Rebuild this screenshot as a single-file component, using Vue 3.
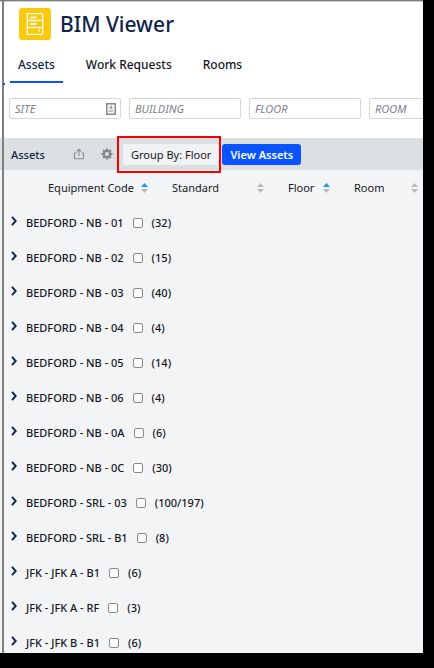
<script setup>
import { ref } from 'vue'

const tabs = ['Assets', 'Work Requests', 'Rooms']
const activeTab = ref('Assets')

const filters = [
  { name: 'SITE', picker: true },
  { name: 'BUILDING' },
  { name: 'FLOOR' },
  { name: 'ROOM' },
]

const columns = [
  { name: 'Equipment Code', key: 'code', sorted: true },
  { name: 'Standard', key: 'standard', sorted: false },
  { name: 'Floor', key: 'floor', sorted: true },
  { name: 'Room', key: 'room', sorted: false },
]

const groups = ref([
  { name: 'BEDFORD - NB - 01', count: '32' },
  { name: 'BEDFORD - NB - 02', count: '15' },
  { name: 'BEDFORD - NB - 03', count: '40' },
  { name: 'BEDFORD - NB - 04', count: '4' },
  { name: 'BEDFORD - NB - 05', count: '14' },
  { name: 'BEDFORD - NB - 06', count: '4' },
  { name: 'BEDFORD - NB - 0A', count: '6' },
  { name: 'BEDFORD - NB - 0C', count: '30' },
  { name: 'BEDFORD - SRL - 03', count: '100/197' },
  { name: 'BEDFORD - SRL - B1', count: '8' },
  { name: 'JFK - JFK A - B1', count: '6' },
  { name: 'JFK - JFK A - RF', count: '3' },
  { name: 'JFK - JFK B - B1', count: '6' },
].map((g) => ({ ...g, checked: false })))
</script>

<template>
  <div class="frame">
    <main class="screen">
      <header class="title-bar">
        <svg class="logo" viewBox="0 0 32 32" aria-hidden="true">
          <rect width="32" height="32" rx="3" fill="#f8c90e" />
          <g fill="none" stroke="#fffbe6" stroke-width="1.3">
            <rect x="8.3" y="5.6" width="15.4" height="20.8" rx="0.5" />
            <path d="M8.3 12.5H23.7M8.3 19.5H23.7" />
            <path d="M11.3 9H17.3V10H11.3ZM11.3 15.5H17.3V16.5H11.3Z" stroke-width="1" />
          </g>
          <circle cx="20" cy="22.5" r="1.1" fill="#fffbe6" />
        </svg>
        <h1>BIM Viewer</h1>
      </header>

      <nav class="tabs">
        <a
          v-for="tab in tabs"
          :key="tab"
          href="#"
          :class="{ active: tab === activeTab }"
          @click.prevent="activeTab = tab"
        >{{ tab }}</a>
      </nav>

      <form class="filters" @submit.prevent>
        <div v-for="f in filters" :key="f.name" class="field">
          <input type="text" :placeholder="f.name" :aria-label="f.name" />
          <svg v-if="f.picker" viewBox="0 0 10 12" aria-hidden="true">
            <rect x="0.75" y="0.75" width="8.5" height="10.5" fill="#f4f4f4" stroke="#85898c" stroke-width="1.5" />
            <path d="M5 2.6V6M3.6 4.8H6.4M2.8 8H7.2" fill="none" stroke="#85898c" stroke-width="1.1" />
          </svg>
        </div>
      </form>

      <section class="toolbar">
        <h2>Assets</h2>
        <button class="icon-button share" type="button" aria-label="Export">
          <svg viewBox="0 0 12 12" aria-hidden="true">
            <path d="M3.5 5H1.5V10.7H10.5V5H8.5M6 8V1.5M3.8 3.5L6 1.2L8.2 3.5" fill="none" stroke="#8b9095" stroke-width="1.1" />
          </svg>
        </button>
        <button class="icon-button" type="button" aria-label="Settings">
          <svg viewBox="0 0 12 12" aria-hidden="true">
            <g stroke="#85898e" stroke-width="2.2">
              <path d="M6 0.5V11.5M0.5 6H11.5M2.1 2.1L9.9 9.9M9.9 2.1L2.1 9.9" />
            </g>
            <circle cx="6" cy="6" r="4.3" fill="#85898e" />
            <circle cx="6" cy="6" r="2" fill="#dde0e2" />
          </svg>
        </button>
        <div class="highlight">
          <button class="group-button" type="button">Group By: Floor</button>
        </div>
        <button class="view-button" type="button">View Assets</button>
      </section>

      <table>
        <thead>
          <tr>
            <th v-for="col in columns" :key="col.key" :class="col.key" scope="col">
              <div class="heading">
                <span>{{ col.name }}</span>
                <svg viewBox="0 0 7 10" aria-hidden="true">
                  <path d="M0 4L3.5 0L7 4Z" :fill="col.sorted ? '#2390f5' : '#b5b9be'" />
                  <path d="M0 6L3.5 10L7 6Z" fill="#b5b9be" />
                </svg>
              </div>
            </th>
          </tr>
        </thead>
        <tbody>
          <tr v-for="g in groups" :key="g.name">
            <td colspan="4">
              <div class="group">
                <button class="expander" type="button" :aria-label="'Expand ' + g.name">
                  <svg viewBox="0 0 6 10" aria-hidden="true">
                    <path d="M1 0.8L4.7 5L1 9.2" fill="none" stroke="#14284b" stroke-width="2" />
                  </svg>
                </button>
                <label>
                  <span>{{ g.name }}</span>
                  <input v-model="g.checked" type="checkbox" />
                  <span>({{ g.count }})</span>
                </label>
              </div>
            </td>
          </tr>
        </tbody>
      </table>
    </main>
  </div>
</template>

<style>
body {
  background: #000;
}
</style>

<style scoped>
.frame {
  box-sizing: border-box;
  height: 100vh;
  padding: 0 11px 15px 0;
  font-family: "Noto Sans", "Open Sans", sans-serif;
  font-size: 11px;
  color: #14181e;
}

.screen {
  position: relative;
  box-sizing: border-box;
  height: 100%;
  overflow: hidden;
  background: #f3f4f6;
  border-top: 1px solid #7d7d7d;
}

.screen::before {
  content: "";
  position: absolute;
  z-index: 1;
  top: 0;
  bottom: 0;
  left: 2px;
  width: 2px;
  background: #7f7f7f;
}

button,
input {
  font: inherit;
  color: inherit;
}

button {
  border: 0;
  padding: 0;
  background: none;
}

svg {
  display: block;
}

.title-bar {
  box-sizing: border-box;
  display: flex;
  align-items: center;
  gap: 9px;
  height: 46px;
  padding: 0 0 1px 19px;
  border-top: 1px solid #cfcfcf;
  background: #fff;
}

.logo {
  width: 32px;
  height: 32px;
}

h1 {
  margin: 0;
  font-size: 21px;
  line-height: 32px;
  font-weight: 500;
  color: #10244a;
}

.tabs {
  position: relative;
  display: flex;
  gap: 15px;
  height: 36px;
  padding-left: 10px;
  background: #fff;
}

.tabs::before {
  content: "";
  position: absolute;
  z-index: 2;
  bottom: -2px;
  left: 3px;
  width: 2px;
  height: 2px;
  background: #0a54ff;
}

.tabs a {
  padding: 2px 8px 0;
  font-size: 12px;
  line-height: 32px;
  font-weight: 500;
  color: #14181e;
  text-decoration: none;
  border-bottom: 2px solid transparent;
}

.tabs a.active {
  color: #10244a;
  border-bottom-color: #0a54ff;
}

.filters {
  display: flex;
  gap: 8px;
  padding: 15px 0 19px 9px;
  background: #fff;
}

.field {
  box-sizing: border-box;
  display: flex;
  flex: 0 0 112px;
  min-width: 0;
  align-items: center;
  height: 21px;
  padding: 0 4px 0 5px;
  border: 1px solid #d2d9d9;
  border-radius: 2px;
}

.field input {
  flex: 1;
  width: 100%;
  min-width: 0;
  padding: 0;
  border: 0;
  outline: 0;
  background: none;
}

.field input::placeholder {
  color: #7c828a;
  font-style: italic;
  opacity: 1;
}

.field svg {
  flex: none;
  width: 10px;
  height: 12px;
}

.toolbar {
  display: flex;
  align-items: center;
  height: 32px;
  padding-left: 11px;
  background: #dde0e2;
}

h2 {
  width: 34px;
  margin: 0;
  font-size: 11px;
  font-weight: 500;
  color: #10244a;
}

.icon-button svg {
  width: 12px;
  height: 12px;
}

.share {
  margin: 0 16px 0 28px;
}

.highlight {
  margin: 0 1px 0 4px;
  padding: 6px 0 6px 4px;
  border: 2px solid #f90000;
}

.group-button,
.view-button {
  height: 21px;
  padding: 0 8px;
  border-radius: 3px;
  white-space: nowrap;
}

.group-button {
  display: block;
  background: #f1f2f4;
}

.view-button {
  background: #0a54ff;
  color: #fff;
  font-weight: 600;
}

table {
  width: 100%;
  table-layout: fixed;
  border-collapse: collapse;
}

th,
td {
  height: 35px;
  padding: 0;
  font-weight: 400;
  text-align: left;
}

td {
  font-weight: 500;
}

.code {
  width: 160px;
}

.standard {
  width: 116px;
}

.floor {
  width: 66px;
}

.heading {
  display: flex;
  align-items: center;
  justify-content: space-between;
  padding: 0 12px;
  white-space: nowrap;
}

.code .heading {
  padding-left: 48px;
}

.room .heading {
  padding-right: 5px;
}

.heading svg {
  width: 7px;
  height: 10px;
}

.group {
  display: flex;
  align-items: center;
  gap: 9px;
  padding-left: 11px;
}

.expander {
  padding-bottom: 4px;
}

.expander svg {
  width: 6px;
  height: 10px;
}

.group label {
  display: flex;
  align-items: center;
  gap: 9px;
}

.group input {
  appearance: none;
  box-sizing: border-box;
  width: 10px;
  height: 10px;
  margin: 0;
  border: 1px solid #85888c;
  border-radius: 2px;
  background: #fff;
}

.group input:checked {
  background: #0a54ff;
}
</style>
